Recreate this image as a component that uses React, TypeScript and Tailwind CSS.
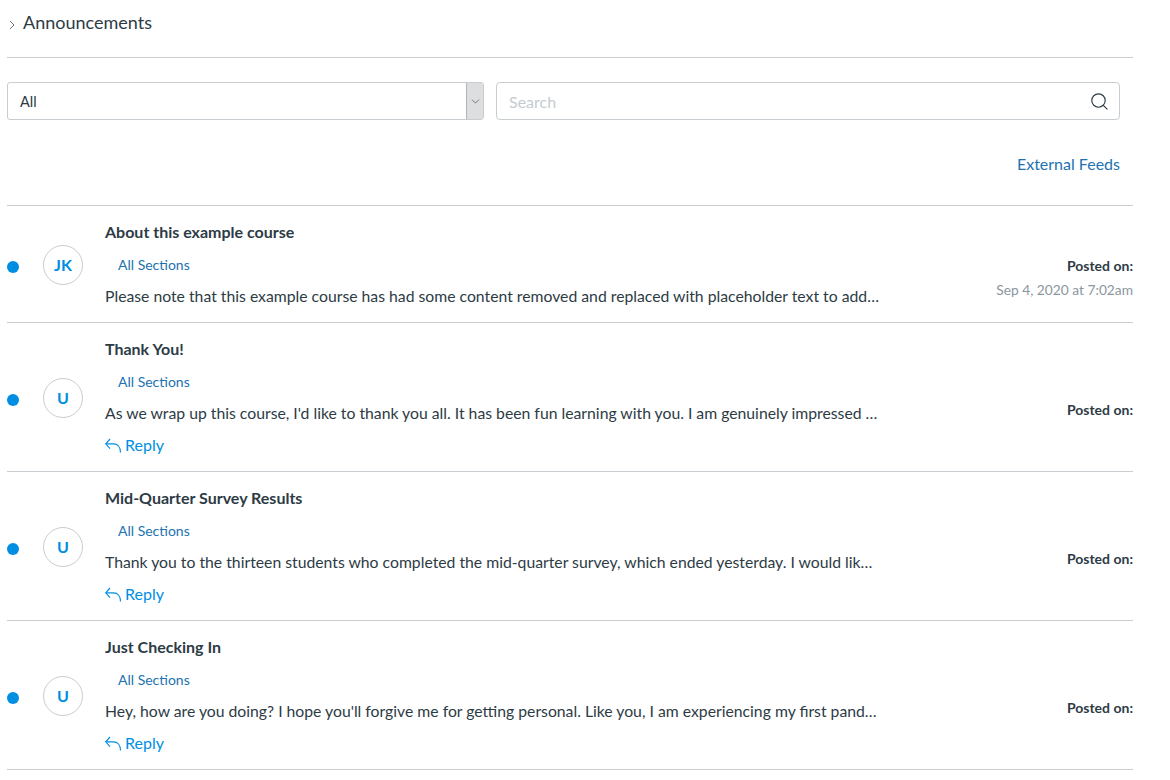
import { ChevronDown } from "lucide-react";

interface Announcement {
  initials: string;
  title: string;
  body: string;
  date?: string;
  canReply: boolean;
}

const ANNOUNCEMENTS: Announcement[] = [
  {
    initials: "JK",
    title: "About this example course",
    body: "Please note that this example course has had some content removed and replaced with placeholder text to add…",
    date: "Sep 4, 2020 at 7:02am",
    canReply: false,
  },
  {
    initials: "U",
    title: "Thank You!",
    body: "As we wrap up this course, I'd like to thank you all. It has been fun learning with you. I am genuinely impressed …",
    canReply: true,
  },
  {
    initials: "U",
    title: "Mid-Quarter Survey Results",
    body: "Thank you to the thirteen students who completed the mid-quarter survey, which ended yesterday. I would lik…",
    canReply: true,
  },
  {
    initials: "U",
    title: "Just Checking In",
    body: "Hey, how are you doing? I hope you'll forgive me for getting personal. Like you, I am experiencing my first pand…",
    canReply: true,
  },
];

function ReplyIcon() {
  return (
    <svg width="17" height="15" viewBox="0 0 17 15" fill="none" stroke="currentColor" strokeWidth="1.15" className="mr-[3px] shrink-0">
      <path d="M5 1 L0.8 5.8 L5 10.6" />
      <path d="M0.8 5.8 H8.5 C12.5 5.8 15.5 9 15.5 14.5" />
    </svg>
  );
}

function AnnouncementRow({ item }: { item: Announcement }) {
  return (
    <div className="flex border-b border-[#c7cdd1]">
      <div className="flex w-[98px] shrink-0 items-center pt-[2px]">
        <span className="mt-[3px] h-3 w-3 rounded-full bg-[#008ee2]" />
        <span className="ml-6 flex h-10 w-10 items-center justify-center rounded-full border border-[#c7cdd1] text-[16px] font-bold text-[#008ee2]">
          {item.initials}
        </span>
      </div>

      <div className="min-w-0 flex-1 pt-[16px] pb-[16px]">
        <h3 className="text-[16px] leading-[20px] font-bold text-[#2d3b45]">{item.title}</h3>
        <div className="mt-[13px] pl-[13px] text-[14px] leading-[20px] text-[#2272b0]">All Sections</div>
        <p className="mt-[11px] text-[15.75px] leading-[20px] whitespace-nowrap text-[#2d3b45]">{item.body}</p>
        {item.canReply && (
          <a className="mt-[12px] flex h-5 items-center text-[16px] leading-[20px] text-[#008ee2]">
            <ReplyIcon />
            Reply
          </a>
        )}
      </div>

      <div className={item.date ? "shrink-0 pt-[50px] text-right text-[14px] leading-[20px]" : "shrink-0 pt-[77px] text-right text-[14px] leading-[20px]"}>
        <div className="font-bold text-[#2d3b45]">Posted on:</div>
        {item.date && <div className="mt-[4px] text-[13.75px] text-[#8b969e]">{item.date}</div>}
      </div>
    </div>
  );
}

export default function App() {
  return (
    <div className="h-[780px] w-[1170px] overflow-hidden bg-white font-['Lato','Noto_Sans',sans-serif] text-[#2d3b45]">
      <div className="ml-[7px] w-[1126px]">
        <div className="flex h-[58px] items-start border-b border-[#c7cdd1] pt-[10px]">
          <svg width="6" height="10" viewBox="0 0 6 10" fill="none" stroke="#59656d" strokeWidth="0.9" className="mt-[10px] ml-[2px]">
            <path d="M1 1 L5 5 L1 9" />
          </svg>
          <h1 className="ml-[8px] text-[18px] leading-[24px] text-[#2d3b45]">Announcements</h1>
        </div>

        {/* Filters */}
        <div className="mt-[24px] flex gap-3 pr-[13px]">
          <div className="flex h-[38px] w-[477px] items-center overflow-hidden rounded-[3px] border border-[#c7cdd1] pl-3">
            <span className="flex-1 pt-[1px] text-[14.5px] text-[#2d3b45]">All</span>
            <span className="flex h-full w-[17px] items-center justify-center border-l border-[#b0b5b8] bg-[#dcdedf]">
              <ChevronDown size={13} strokeWidth={1.5} className="text-[#59656d]" />
            </span>
          </div>
          <div className="flex h-[38px] flex-1 items-center rounded-[4px] border border-[#c7cdd1] pr-[11px] pl-3">
            <span className="flex-1 pt-[1px] text-[16px] text-[#c4cbd0]">Search</span>
            <svg width="17" height="17" viewBox="0 0 17 17" fill="none" stroke="#2d3b45" strokeWidth="1.15">
              <circle cx="7.5" cy="7.5" r="6.7" />
              <path d="M12.3 12.3 L16.4 16.4" />
            </svg>
          </div>
        </div>

        <div className="mt-[34px] h-[52px] border-b border-[#c7cdd1] pr-[13px] text-right text-[16px] leading-[20px] text-[#2272b0]">
          External Feeds
        </div>

        {ANNOUNCEMENTS.map((item) => (
          <AnnouncementRow key={item.title} item={item} />
        ))}
      </div>
    </div>
  );
}
